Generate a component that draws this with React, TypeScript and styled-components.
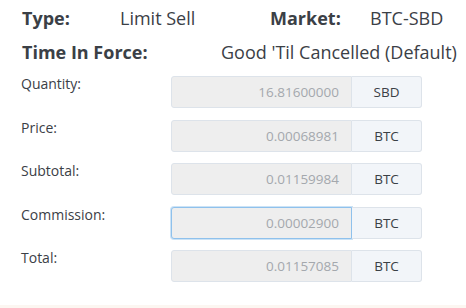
import styled, { createGlobalStyle } from "styled-components";

const GlobalStyle = createGlobalStyle`
  html, body {
    margin: 0;
    padding: 0;
    background: #ffffff;
  }
  body {
    font-family: "Open Sans", "Noto Sans", sans-serif;
    color: #3b4046;
  }
`;

const rows = [
  { label: "Quantity:", value: "16.81600000", unit: "SBD" },
  { label: "Price:", value: "0.00068981", unit: "BTC" },
  { label: "Subtotal:", value: "0.01159984", unit: "BTC" },
  { label: "Commission:", value: "0.00002900", unit: "BTC", focused: true },
  { label: "Total:", value: "0.01157085", unit: "BTC" },
];

const App = () => {
  return (
    <>
      <GlobalStyle />
      <Page>
        <Summary>
          <SummaryRow>
            <Key $width={98}>Type:</Key>
            <Val $width={150}>Limit Sell</Val>
            <Key $width={100}>Market:</Key>
            <Val>BTC-SBD</Val>
          </SummaryRow>
          <SummaryRow>
            <Key $width={199}>Time In Force:</Key>
            <Val>Good 'Til Cancelled (Default)</Val>
          </SummaryRow>
        </Summary>
        <Form>
          {rows.map((r) => (
            <FormRow key={r.label}>
              <Label>{r.label}</Label>
              <Group>
                <Field $focused={!!r.focused}>{r.value}</Field>
                <Addon>{r.unit}</Addon>
              </Group>
            </FormRow>
          ))}
        </Form>
        <Footer />
      </Page>
    </>
  );
};

const Page = styled.div`
  width: 466px;
  height: 308px;
  display: flex;
  flex-direction: column;
  overflow: hidden;
`;

const Summary = styled.div`
  display: flex;
  flex-direction: column;
  padding: 7px 0 0 22px;
  gap: 12px;
`;

const SummaryRow = styled.div`
  display: flex;
  align-items: baseline;
  font-size: 18px;
  line-height: 22px;
`;

const Key = styled.span<{ $width?: number }>`
  font-weight: 700;
  width: ${(p) => (p.$width ? `${p.$width}px` : "auto")};
  flex-shrink: 0;
`;

const Val = styled.span<{ $width?: number }>`
  font-weight: 400;
  width: ${(p) => (p.$width ? `${p.$width}px` : "auto")};
  flex-shrink: 0;
  white-space: nowrap;
`;

const Form = styled.div`
  display: flex;
  flex-direction: column;
  gap: 10.5px;
  padding: 12px 0 0 21px;
`;

const FormRow = styled.div`
  display: grid;
  grid-template-columns: 150px 251px;
  align-items: start;
`;

const Label = styled.div`
  font-size: 14px;
  line-height: 18px;
  color: #3b4046;
`;

const Group = styled.div`
  display: flex;
  height: 32px;
  margin-top: 1px;
`;

const Field = styled.div<{ $focused: boolean }>`
  flex: 1;
  box-sizing: border-box;
  background: #eeeeee;
  border: 1px solid ${(p) => (p.$focused ? "#8fc1ec" : "#dde3ea")};
  box-shadow: ${(p) => (p.$focused ? "0 0 0 1px rgba(143,193,236,0.45)" : "none")};
  border-radius: 3px 0 0 3px;
  display: flex;
  align-items: center;
  justify-content: flex-end;
  padding-right: 12px;
  font-size: 13.5px;
  color: #a4a8ad;
`;

const Addon = styled.div`
  width: 70px;
  box-sizing: border-box;
  background: #f2f5f9;
  border: 1px solid #dde3ea;
  border-left: none;
  border-radius: 0 3px 3px 0;
  display: flex;
  align-items: center;
  justify-content: center;
  font-size: 13.5px;
  color: #3b4046;
`;

const Footer = styled.div`
  margin-top: auto;
  height: 3px;
  background: #fcf6f1;
`;

export default App;
